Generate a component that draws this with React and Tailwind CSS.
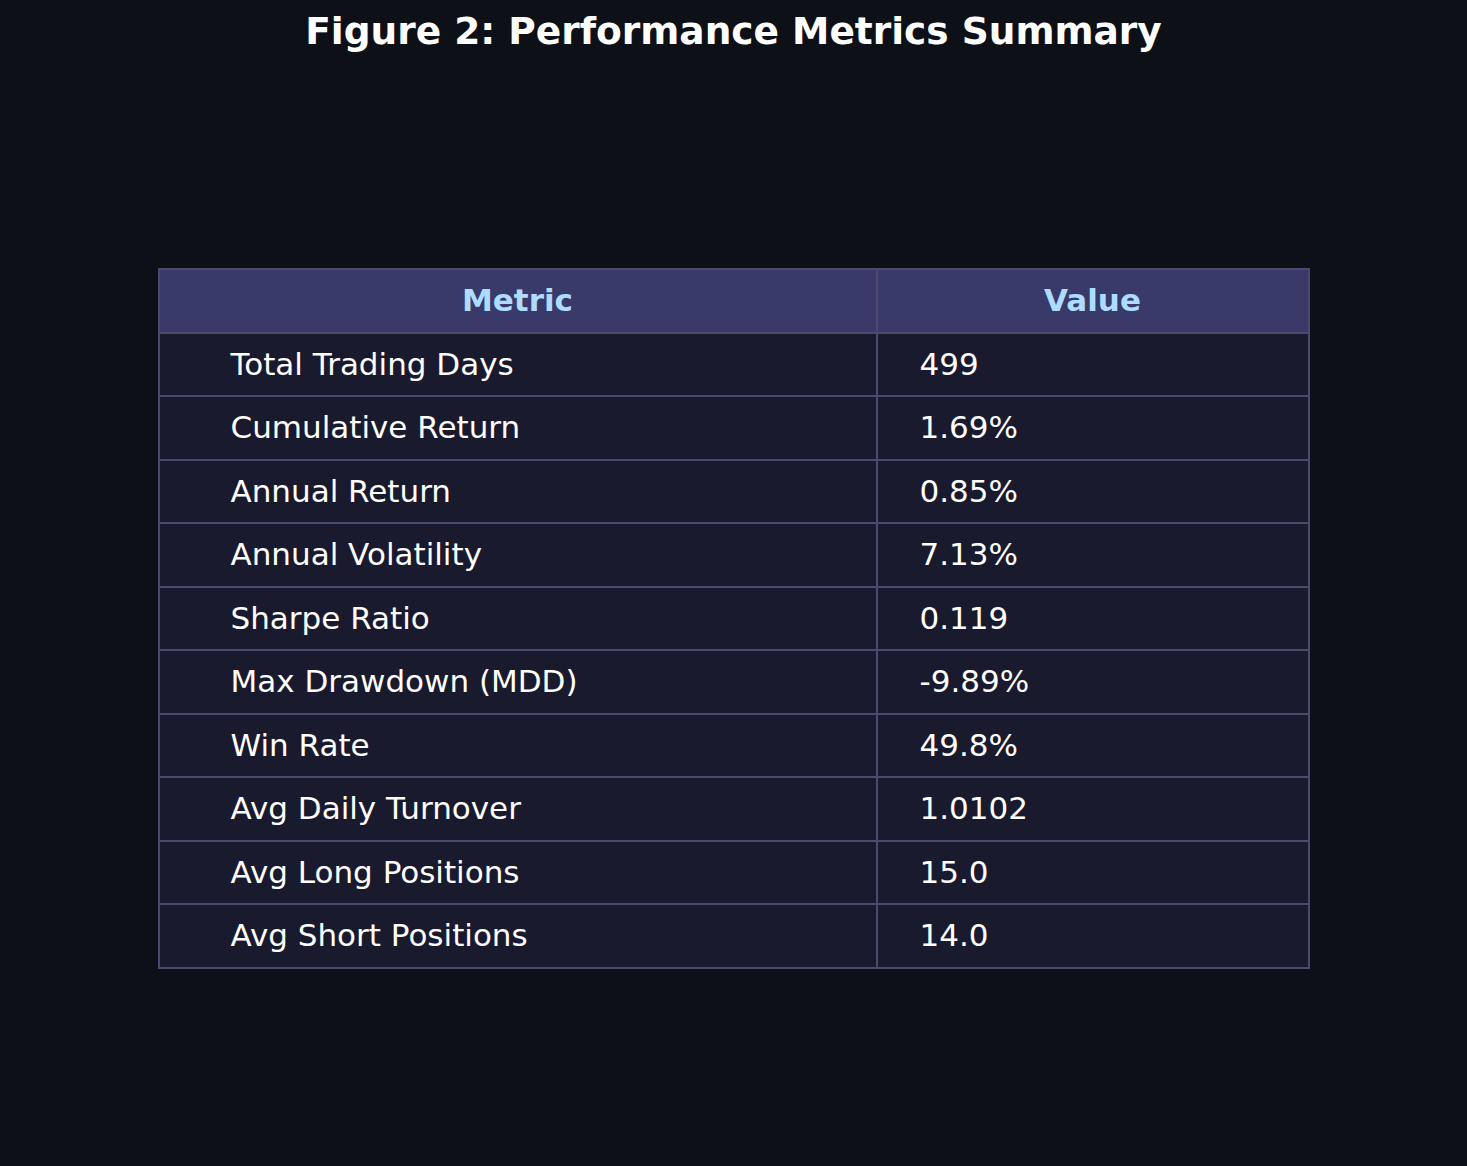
import React from 'react'

const ROWS = [
  ['Total Trading Days', '499'],
  ['Cumulative Return', '1.69%'],
  ['Annual Return', '0.85%'],
  ['Annual Volatility', '7.13%'],
  ['Sharpe Ratio', '0.119'],
  ['Max Drawdown (MDD)', '-9.89%'],
  ['Win Rate', '49.8%'],
  ['Avg Daily Turnover', '1.0102'],
  ['Avg Long Positions', '15.0'],
  ['Avg Short Positions', '14.0'],
]

export default function App() {
  return (
    <div className="w-[1467px] h-[1166px] bg-[#0d1017] text-white font-['DejaVu_Sans',sans-serif] flex flex-col items-center">
      {/* Title */}
      <h1 className="pt-[9px] text-[37.5px] leading-[45px] font-bold">
        Figure 2: Performance Metrics Summary
      </h1>

      {/* Table */}
      <table className="mt-[214px] border-collapse table-fixed w-[1150px] text-[31px]">
        <colgroup>
          <col className="w-[718px]" />
          <col className="w-[432px]" />
        </colgroup>
        <thead>
          <tr className="h-[63.5px] bg-[#3a3a6a]">
            <th className="border-2 border-[#4a4a6e] font-bold text-[#aedcff] text-center leading-none">Metric</th>
            <th className="border-2 border-[#4a4a6e] font-bold text-[#aedcff] text-center leading-none">Value</th>
          </tr>
        </thead>
        <tbody>
          {ROWS.map(([k, v]) => (
            <tr key={k} className="h-[63.5px] bg-[#1a1a2e]">
              <td className="border-2 border-[#4a4a6e] pl-[71px] text-left leading-none">{k}</td>
              <td className="border-2 border-[#4a4a6e] pl-[42px] text-left leading-none">{v}</td>
            </tr>
          ))}
        </tbody>
      </table>
    </div>
  )
}
